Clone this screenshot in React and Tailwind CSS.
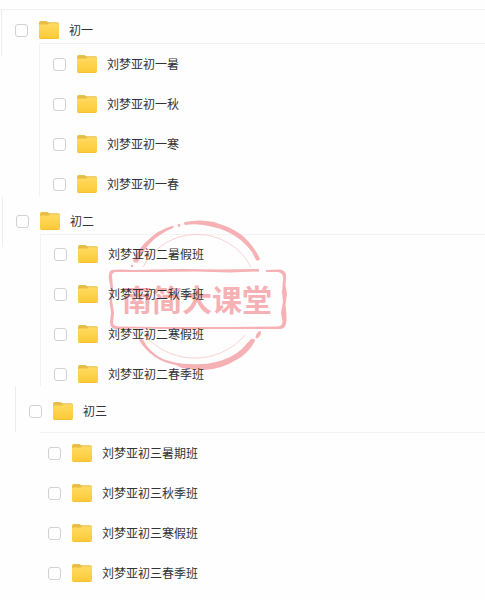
import React, { useState } from 'react';

const groups = [
    {
        name: '初一',
        items: ['刘梦亚初一暑', '刘梦亚初一秋', '刘梦亚初一寒', '刘梦亚初一春'],
        wrap: 'pl-px border-t border-[#f2f2f2]',
        rule: 'h-[46px]',
        header: 'pt-2.5 pb-[3px]',
        list: 'ml-[37px] border-l pt-2.5 pb-0.5',
        row: 'pl-[13px]',
    },
    {
        name: '初二',
        items: ['刘梦亚初二暑假班', '刘梦亚初二秋季班', '刘梦亚初二寒假班', '刘梦亚初二春季班'],
        wrap: 'pl-0.5 mt-px',
        rule: 'h-[50px]',
        header: 'pt-3.5 pb-[3px]',
        list: 'ml-[37px] border-l pt-[9px] pb-0.5',
        row: 'pl-[13px]',
        stamp: true,
    },
    {
        name: '初三',
        items: ['刘梦亚初三暑期班', '刘梦亚初三秋季班', '刘梦亚初三寒假班', '刘梦亚初三春季班'],
        wrap: 'pl-[15px]',
        rule: 'h-[46px]',
        header: 'pt-[15px] pb-[11px]',
        list: 'ml-6 pt-2.5 pb-4',
        row: 'pl-2',
    },
];

const FolderIcon = () => (
    <svg className="w-5 h-[18px] shrink-0" viewBox="0 0 20 18" aria-hidden="true">
        <defs>
            <linearGradient id="folder" x1="0" y1="0" x2="0" y2="1">
                <stop offset="0" stopColor="#ffdb62" />
                <stop offset="1" stopColor="#fcc935" />
            </linearGradient>
        </defs>
        <path d="M0 2Q0 0 2 0H7Q8 0 8.6 .7L9.3 1.2H18.2Q20 1.2 20 3V12H0Z" fill="#e8bd45" />
        <path d="M0 4.6Q0 3.4 1.2 3.4H8.2Q9 3.4 9.6 2.9L10.2 2.6Q10.6 2.3 11.4 2.3H18.6Q20 2.3 20 3.8V16Q20 18 18 18H2Q0 18 0 16Z" fill="url(#folder)" />
        <path d="M.6 17Q1.2 17.7 2.2 17.7H17.8Q18.8 17.7 19.4 17" fill="none" stroke="#efb92e" strokeWidth=".6" />
    </svg>
);

const Stamp = () => (
    <svg className="absolute left-[100px] top-[13px] w-[200px] h-[180px] pointer-events-none" viewBox="100 210 200 180" fill="#f5b1b4" role="img" aria-label="南简大课堂">
        {/* outer ring */}
        <path d="M133 261Q137 250 148 240Q158 230 172 226Q175 226 173 228Q165 231 160 235Q149 242 142 254L138 262Q135 264 133 261Z" />
        <circle cx="132" cy="266" r="1.2" />
        <circle cx="179" cy="225.5" r="1.4" />
        <path d="M185 222Q200 219 214 222L228 227Q241 233 248 241Q256 250 260 259Q258 262 256 260L252 252Q245 243 238 238Q227 230 213 227Q199 223 185 225Q183 223 185 222Z" />
        <path d="M143 340Q150 353 163 359Q176 364 190 364Q205 365 216 362Q232 358 242 349L251 339Q255 338 255 341Q248 354 236 360Q222 369 204 370L189 369L182 368L176 365Q164 363 155 357Q145 350 139 340Q141 338 143 340Z" />
        <path d="M256 335Q258 331 260.5 331Q262 333 259 337Q257 339 255.5 338Z" />
        {/* inner ring */}
        <path d="M143 267A61 61 0 0 1 251 267M141 330A64 61 0 0 0 245 335" fill="none" stroke="#f8c7c9" strokeWidth=".8" />
        {/* frame */}
        <path d="M112 270Q120 269 134 270L154 269.5L183 269L218 269.5L259 269V271.5L230 272.5L195 271.5L160 272L130 272L116 272Q112 272 112 276L113 288L112 300L114 313L113 323Q114 327 121 326.5L155 327L190 327L230 327L278 326.5Q283 326 282.5 321L281 313L283 302L282 292L283 280Q284 273 278 272L266 272V270L280 269.5Q287 271 286 277L285.5 286L287 294L285.5 304L286.5 317Q287 328 281 329L240 329L205 329L170 329L135 328.5L115 329Q110 328 110 322L111 312L109.5 303L111 291L109 280Q108 271 112 270Z" />
        <text x="122" y="311" fontSize="30" fontWeight="700" fontFamily="'Noto Sans CJK SC', sans-serif">南简大课堂</text>
    </svg>
);

const FolderRow = ({ name, checked, onToggle }) => (
    <label className="relative flex items-center h-5 cursor-pointer">
        <input
            type="checkbox"
            checked={checked}
            onChange={onToggle}
            className="appearance-none w-[13px] h-[13px] shrink-0 rounded-[3px] border border-[#d2d2d2] bg-white checked:bg-blue-500 checked:border-blue-500"
        />
        <span className="ml-[11px] flex"><FolderIcon /></span>
        <span className="ml-2.5 pt-0.5 text-[12px] leading-5 text-[#333] whitespace-nowrap">{name}</span>
    </label>
);

const App = () => {
    const [selected, setSelected] = useState([]);

    const toggle = (name) => {
        setSelected(selected.includes(name) ? selected.filter(n => n !== name) : [...selected, name]);
    };

    return (
        <main className="min-h-screen bg-[#fefefe] pt-[9px] font-['Liberation_Sans','Noto_Sans_CJK_SC',sans-serif]">
            {groups.map(group => (
                <section key={group.name} className={`relative flex items-start ${group.wrap}`}>
                    {group.stamp && <Stamp />}
                    <span className={`w-px shrink-0 bg-[#ededed] ${group.rule}`} />
                    <div className="flex-1 min-w-0">
                        <div className={`pl-[13px] ${group.header}`}>
                            <FolderRow name={group.name} checked={selected.includes(group.name)} onToggle={() => toggle(group.name)} />
                        </div>
                        <ul className={`flex flex-col gap-5 border-t border-[#f2f2f2] ${group.list}`}>
                            {group.items.map(item => (
                                <li key={item} className={group.row}>
                                    <FolderRow name={item} checked={selected.includes(item)} onToggle={() => toggle(item)} />
                                </li>
                            ))}
                        </ul>
                    </div>
                </section>
            ))}
        </main>
    );
};

export default App;
